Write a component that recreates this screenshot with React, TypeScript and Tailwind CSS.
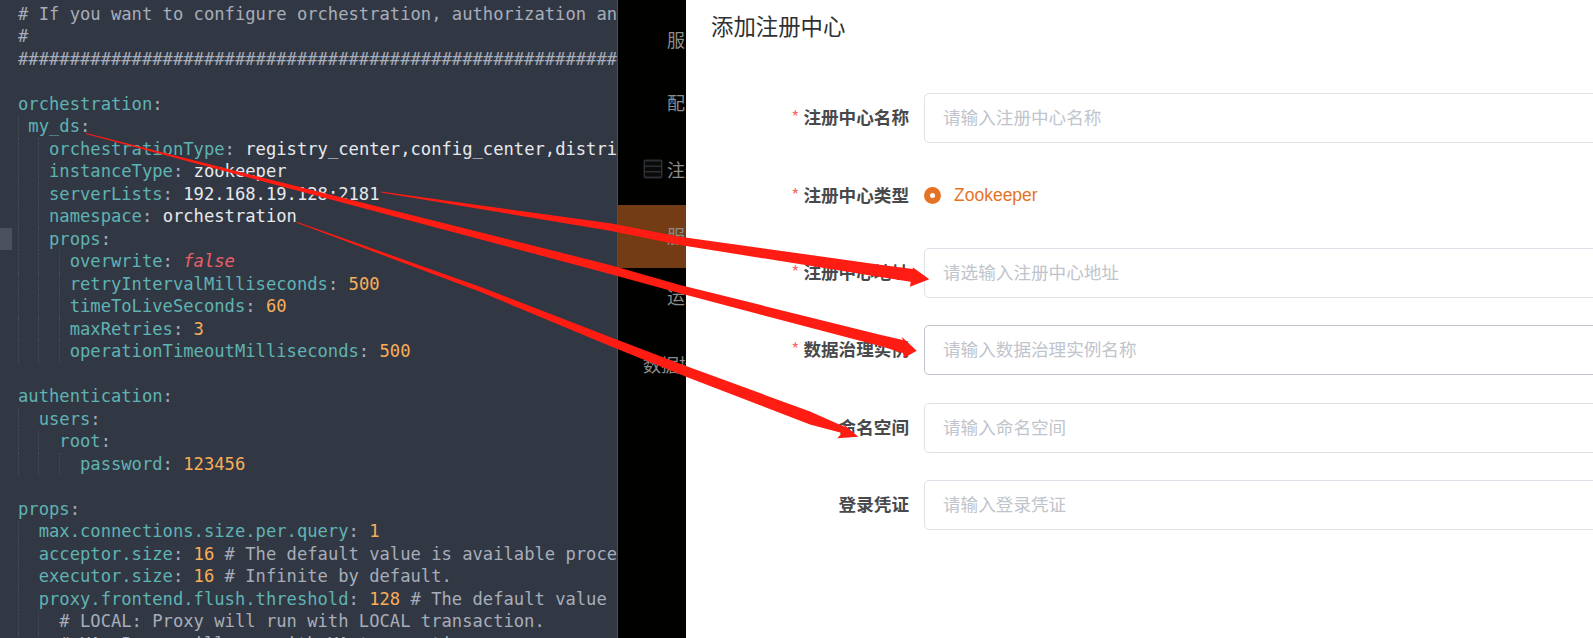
const mono = { fontFamily: '"DejaVu Sans Mono", "Liberation Mono", monospace' };

type Token = [keyof typeof tokenClass, string];
type Line = { guides?: number; mark?: boolean; parts: Token[] };

const tokenClass = {
	k: "text-[#5fb3b3]",
	v: "text-[#e6e9ee]",
	n: "text-[#f9ae58]",
	c: "text-[#a7adba]",
	f: "text-[#ec5f67] italic",
	p: "text-[#a7adba]",
};

const lines: Line[] = [
	{ parts: [["c", "# If you want to configure orchestration, authorization and proxy properties"]] },
	{ parts: [["c", "#"]] },
	{ parts: [["c", "#".repeat(100)]] },
	{ parts: [] },
	{ parts: [["k", "orchestration"], ["p", ":"]] },
	{ guides: 1, parts: [["k", " my_ds"], ["p", ":"]] },
	{ guides: 2, parts: [["k", "   orchestrationType"], ["p", ": "], ["v", "registry_center,config_center,distributed_lock"]] },
	{ guides: 2, parts: [["k", "   instanceType"], ["p", ": "], ["v", "zookeeper"]] },
	{ guides: 2, parts: [["k", "   serverLists"], ["p", ": "], ["v", "192.168.19.128:2181"]] },
	{ guides: 2, parts: [["k", "   namespace"], ["p", ": "], ["v", "orchestration"]] },
	{ guides: 2, mark: true, parts: [["k", "   props"], ["p", ":"]] },
	{ guides: 3, parts: [["k", "     overwrite"], ["p", ": "], ["f", "false"]] },
	{ guides: 3, parts: [["k", "     retryIntervalMilliseconds"], ["p", ": "], ["n", "500"]] },
	{ guides: 3, parts: [["k", "     timeToLiveSeconds"], ["p", ": "], ["n", "60"]] },
	{ guides: 3, parts: [["k", "     maxRetries"], ["p", ": "], ["n", "3"]] },
	{ guides: 3, parts: [["k", "     operationTimeoutMilliseconds"], ["p", ": "], ["n", "500"]] },
	{ parts: [] },
	{ parts: [["k", "authentication"], ["p", ":"]] },
	{ guides: 1, parts: [["k", "  users"], ["p", ":"]] },
	{ guides: 2, parts: [["k", "    root"], ["p", ":"]] },
	{ guides: 3, parts: [["k", "      password"], ["p", ": "], ["n", "123456"]] },
	{ parts: [] },
	{ parts: [["k", "props"], ["p", ":"]] },
	{ guides: 1, parts: [["k", "  max.connections.size.per.query"], ["p", ": "], ["n", "1"]] },
	{ guides: 1, parts: [["k", "  acceptor.size"], ["p", ": "], ["n", "16"], ["c", " # The default value is available processors count * 2."]] },
	{ guides: 1, parts: [["k", "  executor.size"], ["p", ": "], ["n", "16"], ["c", " # Infinite by default."]] },
	{ guides: 1, parts: [["k", "  proxy.frontend.flush.threshold"], ["p", ": "], ["n", "128"], ["c", " # The default value is 128."]] },
	{ guides: 2, parts: [["c", "    # LOCAL: Proxy will run with LOCAL transaction."]] },
	{ guides: 2, parts: [["c", "    # XA: Proxy will run with XA transaction."]] },
];

const fields = [
	{ label: "注册中心名称", placeholder: "请输入注册中心名称", required: true },
	{ label: "注册中心类型", radio: true, required: true },
	{ label: "注册中心地址", placeholder: "请选输入注册中心地址", required: true },
	{ label: "数据治理实例", placeholder: "请输入数据治理实例名称", required: true, active: true },
	{ label: "命名空间", placeholder: "请输入命名空间" },
	{ label: "登录凭证", placeholder: "请输入登录凭证" },
];

function EditorPane() {
	return (
		<div className="relative h-full w-[618px] shrink-0 overflow-hidden border-r border-[#4a505c] bg-[#323843] pt-[3px] text-[17.16px] leading-[22.49px]" style={mono}>
			{lines.map((line, i) => (
				<div key={i} className="relative h-[22.49px] whitespace-pre pl-[18px]">
					{line.mark && <span className="absolute inset-y-0 left-0 w-3 bg-[#4a505c]" />}
					{(line.guides ?? 0) > 0 && <span className="absolute inset-y-0 left-[18px] border-l border-dotted border-[#474d59]" />}
					{(line.guides ?? 0) > 1 && <span className="absolute inset-y-0 left-[38px] border-l border-dotted border-[#474d59]" />}
					{(line.guides ?? 0) > 2 && <span className="absolute inset-y-0 left-[59px] border-l border-dotted border-[#474d59]" />}
					{line.parts.map(([kind, text], j) => (
						<span key={j} className={tokenClass[kind]}>
							{text}
						</span>
					))}
				</div>
			))}
		</div>
	);
}

function ServerIcon() {
	return (
		<svg width="20" height="20" viewBox="0 0 20 20" className="shrink-0">
			<rect x="0.5" y="0.5" width="19" height="19" rx="2" fill="#2b2e33" />
			<rect x="2" y="2.5" width="16" height="4" fill="#0a0a0a" />
			<rect x="2" y="8" width="16" height="4" fill="#0a0a0a" />
			<rect x="2" y="13.5" width="16" height="4" fill="#0a0a0a" />
		</svg>
	);
}

function SideNav() {
	return (
		<div className="flex h-full w-[68px] shrink-0 flex-col overflow-hidden whitespace-nowrap bg-[#010200] pt-[8px] text-[18px] text-[#8c8c8c]">
			<div className="flex h-[63px] items-center pl-[49px]">服务</div>
			<div className="flex h-[63px] items-center pl-[49px]">配置</div>
			<div className="flex h-[71px] items-center gap-[4px] pb-[1px] pl-[25px]">
				<ServerIcon />
				注册中心
			</div>
			<div className="flex h-[63px] items-center bg-[#733c14] pb-[2px] pl-[49px]">服务</div>
			<div className="flex h-[60px] items-center pb-[4px] pl-[49px]">运维</div>
			<div className="flex h-[74px] items-center pb-[2px] pl-[25px]">数据接入</div>
		</div>
	);
}

function FormPane() {
	return (
		<div className="h-full min-w-0 flex-1 overflow-hidden bg-white">
			<div className="pl-[25px] pt-[9px] text-[22.4px] leading-[32px] text-[#303133]">添加注册中心</div>
			<div className="mt-[52px] flex flex-col gap-[27.4px]">
				{fields.map((field) => (
					<div key={field.label} className="flex h-[50px] items-center">
						<div className="w-[223px] shrink-0 pb-[1px] text-right text-[17.6px] font-bold text-[#48494b]">
							{field.required && <span className="mr-[4px] font-normal text-[#f56c6c]">*</span>}
							{field.label}
						</div>
						{field.radio ? (
							<div className="ml-[15px] flex items-center gap-[13px]">
								<span className="flex h-[17px] w-[17px] items-center justify-center rounded-full bg-[#e67325]">
									<span className="h-[5px] w-[5px] rounded-full bg-white" />
								</span>
								<span className="font-['Liberation_Sans',sans-serif] text-[17.5px] text-[#e67325]">Zookeeper</span>
							</div>
						) : (
							<div
								className={`ml-[15px] flex h-[50px] w-[760px] shrink-0 items-center rounded-[5px] border pb-[1px] pl-[18px] text-[17.6px] text-[#c0c4cc] ${
									field.active ? "border-[#c0c4cc]" : "border-[#e0e0e8]"
								}`}
							>
								{field.placeholder}
							</div>
						)}
					</div>
				))}
			</div>
		</div>
	);
}

function Arrows() {
	return (
		<svg width="1593" height="638" viewBox="0 0 1593 638" className="pointer-events-none absolute left-0 top-0">
			<g fill="#ff1c12">
				<polygon points="381,191.5 610,223.3 680,236.7 880,264.7 913,269 912.7,267.3 929.3,279.3 910,286.7 910.7,281.7 880,277 680,245 610,230.7 381,192.5" />
				<polygon points="86,133 280,182 610,265 680,285 880,334.7 903,340 901.7,336.7 916.7,350.7 904,358 903,353 880,346 680,293.3 610,274 280,186 86,134" />
				<polygon points="296.7,221.7 480,286.7 610,337 686,366 810,411.5 845,427 842,423 858.3,436.7 837.3,438.3 842,433 810,424.5 686,376.7 610,346 480,291.7 296.7,222.7" />
			</g>
		</svg>
	);
}

export default function App() {
	return (
		<div className="relative flex h-[638px] w-[1593px] overflow-hidden font-['Noto_Sans_CJK_SC','Liberation_Sans',sans-serif]">
			<EditorPane />
			<SideNav />
			<FormPane />
			<Arrows />
		</div>
	);
}
